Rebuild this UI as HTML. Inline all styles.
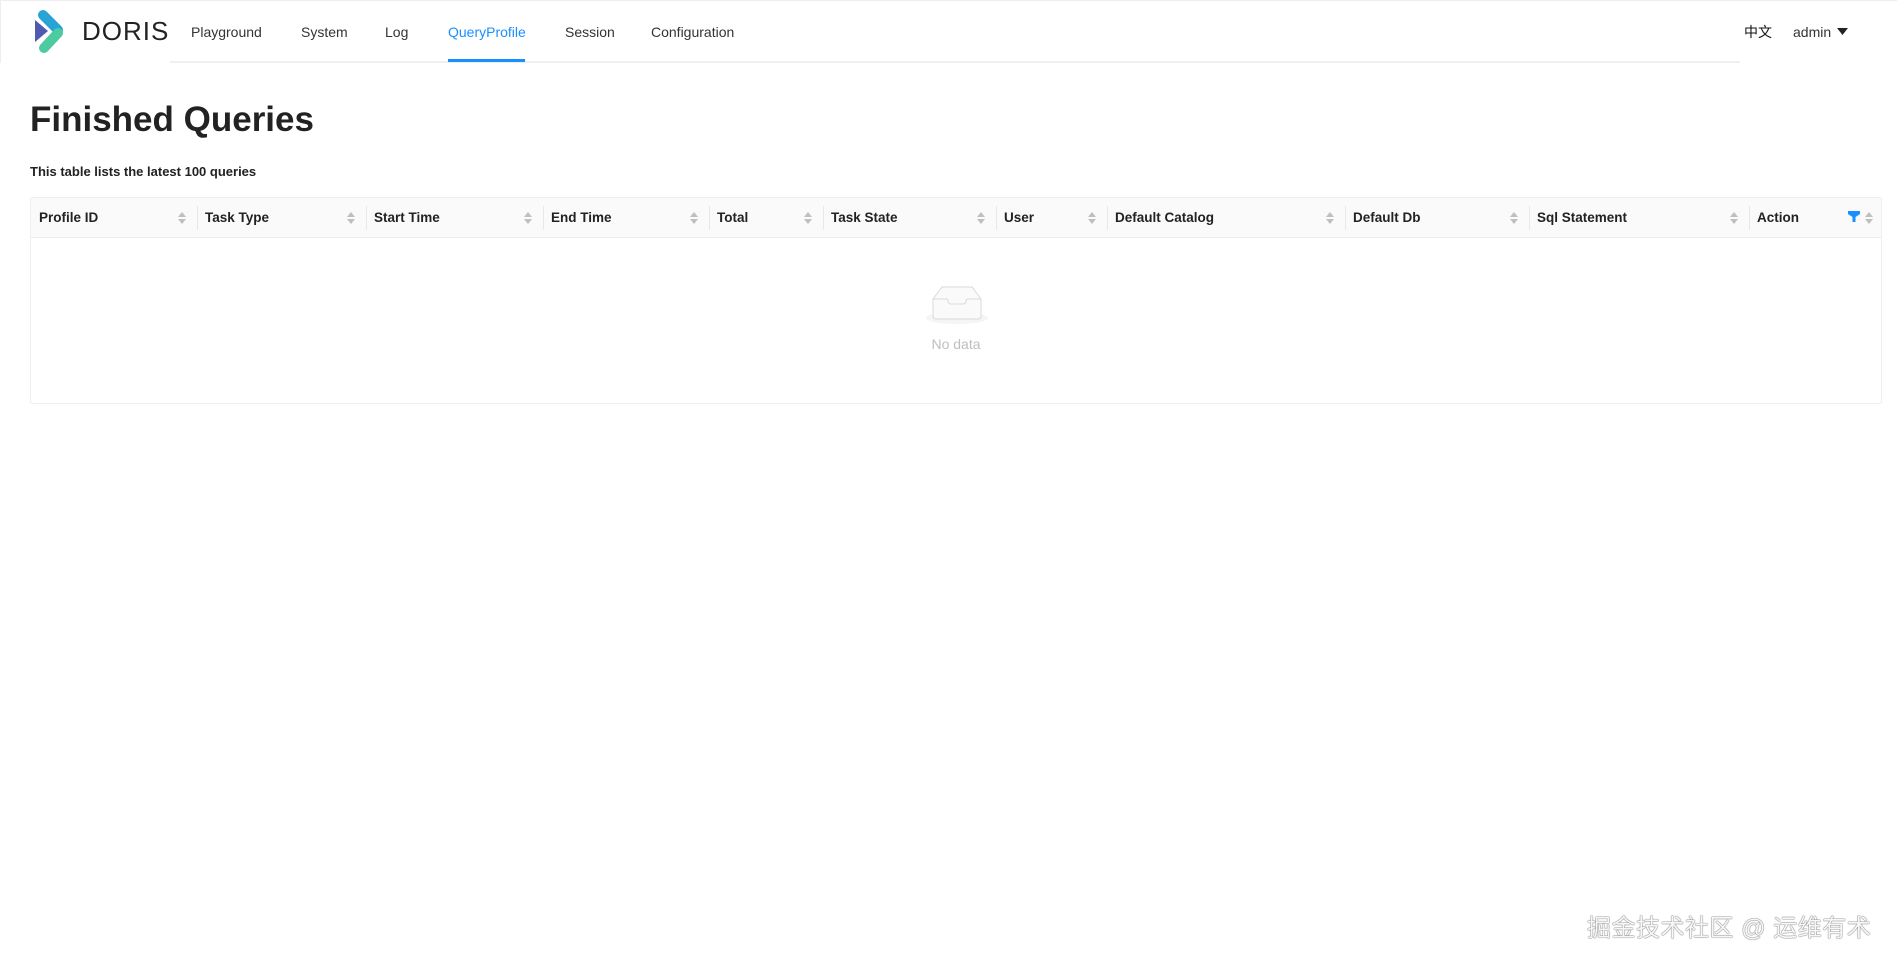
<!DOCTYPE html>
<html><head><meta charset="utf-8"><style>
*{box-sizing:border-box;margin:0;padding:0}
body{width:1897px;height:962px;background:#fff;font-family:"Liberation Sans","Noto Sans CJK SC",sans-serif;color:#222;position:relative;overflow:hidden}
.hdr{position:absolute;left:0;top:0;width:1897px;height:63px;border-top:1px solid #eee;border-left:1px solid #eee}
.hline{position:absolute;left:170px;top:61px;width:1570px;height:2px;background:#efefef}
.nav{position:absolute;top:24px;font-size:14px;color:#333}
.act{color:#1890ff}
.ul{position:absolute;left:448px;top:59px;width:77px;height:3px;background:#1890ff}
h1{position:absolute;left:30px;top:100px;font-size:35px;font-weight:600;color:#222}
.sub{position:absolute;left:30px;top:164px;font-size:13px;font-weight:600;color:#222}
.tbl{position:absolute;left:30px;top:197px;width:1852px;height:207px;border:1px solid #eee;border-radius:2px}
.th{position:absolute;left:0;top:0;width:100%;height:40px;background:#fafafa;border-bottom:1px solid #eee}
.c{position:absolute;top:0;height:40px;line-height:40px;font-size:13.5px;font-weight:600;color:#222;padding-left:8px}
.d{position:absolute;top:8px;width:1px;height:24px;background:#e8e8e8}
.s{position:absolute;top:13px;width:8px;height:14px}
.wm{position:absolute;left:1587px;top:908px;font-size:24px;color:#f7f7f7;text-shadow:0 0 1px #555,0 0 1px #555;letter-spacing:0.5px}
</style></head><body>
<div class="hdr"></div>
<div class="hline"></div>
<svg style="position:absolute;left:33px;top:9px" width="38" height="46" viewBox="0 0 38 46">
<path d="M2 11 L15 22 L2 33 Z" fill="#4e5bb0"/>
<path d="M10 6 L25 21" stroke="#27a3d6" stroke-width="10" stroke-linecap="round"/>
<path d="M25 24 L11 39" stroke="#4ccaa0" stroke-width="10" stroke-linecap="round"/>
</svg>
<div style="position:absolute;left:82px;top:16px;font-size:26px;font-weight:500;letter-spacing:1px;color:#222">DORIS</div>
<div class="nav" style="left:191px">Playground</div>
<div class="nav" style="left:301px">System</div>
<div class="nav" style="left:385px">Log</div>
<div class="nav act" style="left:448px">QueryProfile</div>
<div class="nav" style="left:565px">Session</div>
<div class="nav" style="left:651px">Configuration</div>
<div class="ul"></div>
<div class="nav" style="left:1744px;top:22px;color:#111">中文</div>
<div class="nav" style="left:1793px">admin</div>
<svg style="position:absolute;left:1837px;top:28px" width="11" height="7"><path d="M0 0H11L5.5 7Z" fill="#222"/></svg>
<h1>Finished Queries</h1>
<div class="sub">This table lists the latest 100 queries</div>
<div class="tbl">
<div class="th">
<div class="c" style="left:0">Profile ID</div>
<div class="c" style="left:166px">Task Type</div>
<div class="c" style="left:335px">Start Time</div>
<div class="c" style="left:512px">End Time</div>
<div class="c" style="left:678px">Total</div>
<div class="c" style="left:792px">Task State</div>
<div class="c" style="left:965px">User</div>
<div class="c" style="left:1076px">Default Catalog</div>
<div class="c" style="left:1314px">Default Db</div>
<div class="c" style="left:1498px">Sql Statement</div>
<div class="c" style="left:1718px">Action</div>
<div class="d" style="left:166px"></div><div class="d" style="left:335px"></div><div class="d" style="left:512px"></div><div class="d" style="left:678px"></div><div class="d" style="left:792px"></div><div class="d" style="left:965px"></div><div class="d" style="left:1076px"></div><div class="d" style="left:1314px"></div><div class="d" style="left:1498px"></div><div class="d" style="left:1718px"></div>
<svg width="0" height="0"><defs><g id="ar"><path d="M0 6L4 1L8 6Z M0 8L4 13L8 8Z" fill="#bfbfbf"/></g></defs></svg>
<svg class="s" style="left:147px"><use href="#ar"/></svg>
<svg class="s" style="left:316px"><use href="#ar"/></svg>
<svg class="s" style="left:493px"><use href="#ar"/></svg>
<svg class="s" style="left:659px"><use href="#ar"/></svg>
<svg class="s" style="left:773px"><use href="#ar"/></svg>
<svg class="s" style="left:946px"><use href="#ar"/></svg>
<svg class="s" style="left:1057px"><use href="#ar"/></svg>
<svg class="s" style="left:1295px"><use href="#ar"/></svg>
<svg class="s" style="left:1479px"><use href="#ar"/></svg>
<svg class="s" style="left:1699px"><use href="#ar"/></svg>
<svg class="s" style="left:1834px"><use href="#ar"/></svg>
<svg style="position:absolute;left:1817px;top:13px" width="12" height="12"><path d="M0 0H12V3L7.5 6V11H4.5V6L0 3Z" fill="#1890ff"/></svg>
</div>
<svg style="position:absolute;left:894px;top:85px" width="64" height="42" viewBox="0 0 64 42">
<ellipse cx="32" cy="35" rx="31" ry="6" fill="#f5f5f5"/>
<path d="M8 16 L17 4 H47 L56 16 V33 Q56 36 53 36 H11 Q8 36 8 33 Z" fill="#fafafa" stroke="#d9d9d9"/>
<path d="M8 16 H22 Q23 16 23 18 Q23 21 26 21 H38 Q41 21 41 18 Q41 16 43 16 H56" fill="none" stroke="#d9d9d9"/>
</svg>
<div style="position:absolute;left:0;width:100%;top:138px;text-align:center;font-size:14px;color:#bfbfbf">No data</div>
</div>
<div class="wm">掘金技术社区 @ 运维有术</div>
</body></html>
